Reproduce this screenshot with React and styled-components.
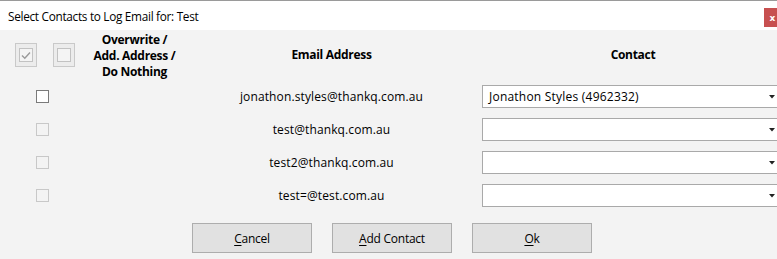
import React from "react";
import styled, { createGlobalStyle } from "styled-components";

const Global = createGlobalStyle`
  html, body { margin: 0; padding: 0; background: #f3f3f3; overflow: hidden; }
  body { font-family: "Open Sans", "Noto Sans", sans-serif; font-size: 12px; color: #000; }
`;

const Window = styled.div`
  width: 777px;
  height: 259px;
  display: flex;
  flex-direction: column;
  background: #f3f3f3;
  border-top: 1px solid #9a9a9a;
  box-sizing: border-box;
  overflow: hidden;
`;

const TitleBar = styled.div`
  height: 29px;
  background: #fff;
  display: flex;
  align-items: center;
  justify-content: space-between;
  padding-left: 8px;
  flex-shrink: 0;
`;

const Title = styled.span`
  font-size: 11.8px;
  letter-spacing: -0.3px;
`;

const CloseBtn = styled.div`
  width: 13px;
  height: 19px;
  margin-top: 7px;
  align-self: flex-start;
  background: #c75050;
  color: #fff;
  font-family: "DejaVu Sans", sans-serif;
  font-weight: bold;
  font-size: 9px;
  display: flex;
  align-items: center;
  justify-content: center;
  padding-left: 4px;
  box-sizing: border-box;
`;

const Grid = styled.div`
  display: grid;
  grid-template-columns: 88px 93px 301px 302px;
  grid-template-rows: 50px repeat(4, 33px);
`;

const HeaderChecks = styled.div`
  display: flex;
  align-items: center;
  gap: 16px;
  padding-left: 15px;
`;

const HeadBtn = styled.div`
  width: 22px;
  height: 24px;
  box-sizing: border-box;
  border: 1px solid #c9c9c9;
  background: #ececec;
  display: flex;
  align-items: center;
  justify-content: center;
`;

const InnerBox = styled.div`
  width: 14px;
  height: 14px;
  box-sizing: border-box;
  border: 1px solid #c2c2c2;
  background: #f4f4f4;
  display: flex;
  align-items: center;
  justify-content: center;
`;

const HeadCell = styled.div`
  display: flex;
  align-items: center;
  justify-content: center;
  text-align: center;
  font-weight: bold;
  font-size: 12px;
  line-height: 16px;
  letter-spacing: -0.3px;
`;

const MultiHead = styled(HeadCell)`
  align-items: flex-start;
  padding-top: 2px;
`;

const CheckCell = styled.div`
  display: flex;
  align-items: center;
  padding-left: 36px;
`;

const RowCheck = styled.div`
  width: 13px;
  height: 13px;
  box-sizing: border-box;
  border: 1px solid ${(p) => (p.$enabled ? "#7a7a7a" : "#c8c8c8")};
  background: ${(p) => (p.$enabled ? "#fff" : "#f3f3f3")};
`;

const EmailCell = styled.div`
  grid-column: 2 / span 2;
  display: flex;
  align-items: center;
  justify-content: center;
  padding-left: 93px;
  letter-spacing: 0.12px;
`;

const ComboCell = styled.div`
  display: flex;
  align-items: center;
`;

const Combo = styled.div`
  width: 302px;
  height: 23px;
  box-sizing: border-box;
  border: 1px solid #a9a9a9;
  background: #fff;
  display: flex;
  align-items: center;
  padding-left: 6px;
  position: relative;
  letter-spacing: 0.22px;
`;

const Arrow = styled.svg`
  position: absolute;
  right: 8px;
  top: 9px;
`;

const Buttons = styled.div`
  display: flex;
  gap: 20px;
  padding-left: 192px;
  margin-top: 11px;
`;

const Button = styled.div`
  width: 120px;
  height: 30px;
  box-sizing: border-box;
  border: 1px solid #adadad;
  background: #e1e1e1;
  display: flex;
  align-items: center;
  justify-content: center;
  letter-spacing: -0.25px;
  u { text-decoration: underline; text-underline-offset: 2px; }
`;

const rows = [
  { email: "jonathon.styles@thankq.com.au", contact: "Jonathon Styles (4962332)", enabled: true },
  { email: "test@thankq.com.au", contact: "", enabled: false },
  { email: "test2@thankq.com.au", contact: "", enabled: false },
  { email: "test=@test.com.au", contact: "", enabled: false },
];

export default function App() {
  return (
    <>
      <Global />
      <Window>
        <TitleBar>
          <Title>Select Contacts to Log Email for: Test</Title>
          <CloseBtn>x</CloseBtn>
        </TitleBar>
        <Grid>
          <HeaderChecks>
            <HeadBtn>
              <InnerBox>
                <svg width="10" height="9" viewBox="0 0 10 9">
                  <path d="M1 4.5 L3.8 7.2 L9 1.5" fill="none" stroke="#9a9a9a" strokeWidth="1.4" />
                </svg>
              </InnerBox>
            </HeadBtn>
            <HeadBtn>
              <InnerBox />
            </HeadBtn>
          </HeaderChecks>
          <MultiHead>
            Overwrite /<br />Add. Address /<br />Do Nothing
          </MultiHead>
          <HeadCell>Email Address</HeadCell>
          <HeadCell>Contact</HeadCell>
          {rows.map((r, i) => (
            <React.Fragment key={i}>
              <CheckCell>
                <RowCheck $enabled={r.enabled} />
              </CheckCell>
              <EmailCell>{r.email}</EmailCell>
              <ComboCell>
                <Combo>
                  {r.contact}
                  <Arrow width="6" height="4" viewBox="0 0 6 4">
                    <path d="M0 0 H6 L3 3.5 Z" fill="#222" />
                  </Arrow>
                </Combo>
              </ComboCell>
            </React.Fragment>
          ))}
        </Grid>
        <Buttons>
          <Button><u>C</u>ancel</Button>
          <Button><u>A</u>dd Contact</Button>
          <Button><u>O</u>k</Button>
        </Buttons>
      </Window>
    </>
  );
}
